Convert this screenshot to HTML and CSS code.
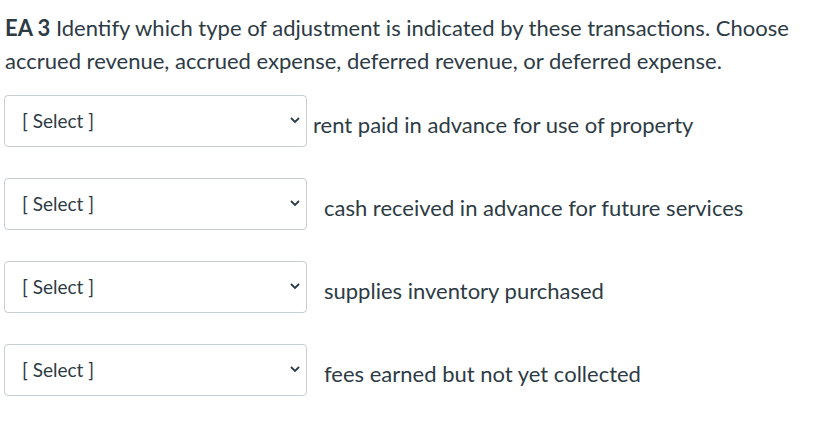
FILE: index.html
```html
<!DOCTYPE html>
<html>
<head>
<meta charset="utf-8">
<link rel="stylesheet" href="styles.css">
</head>
<body>
<div class="question">
  <p class="prompt"><strong>EA 3</strong> Identify which type of adjustment is indicated by these transactions. Choose accrued revenue, accrued expense, deferred revenue, or deferred expense.</p>
  <div class="rows">
    <div class="row">
      <div class="select"><span class="select-text">[ Select ]</span><svg class="chev" width="10" height="6" viewBox="0 0 10 6"><path d="M1 1 L5 5 L9 1" fill="none" stroke="#2d3b45" stroke-width="1.8"/></svg></div>
      <span class="label">rent paid in advance for use of property</span>
    </div>
    <div class="row">
      <div class="select"><span class="select-text">[ Select ]</span><svg class="chev" width="10" height="6" viewBox="0 0 10 6"><path d="M1 1 L5 5 L9 1" fill="none" stroke="#2d3b45" stroke-width="1.8"/></svg></div>
      <span class="label label-indent">cash received in advance for future services</span>
    </div>
    <div class="row">
      <div class="select"><span class="select-text">[ Select ]</span><svg class="chev" width="10" height="6" viewBox="0 0 10 6"><path d="M1 1 L5 5 L9 1" fill="none" stroke="#2d3b45" stroke-width="1.8"/></svg></div>
      <span class="label label-indent">supplies inventory purchased</span>
    </div>
    <div class="row">
      <div class="select"><span class="select-text">[ Select ]</span><svg class="chev" width="10" height="6" viewBox="0 0 10 6"><path d="M1 1 L5 5 L9 1" fill="none" stroke="#2d3b45" stroke-width="1.8"/></svg></div>
      <span class="label label-indent">fees earned but not yet collected</span>
    </div>
  </div>
</div>
</body>
</html>
```
FILE: styles.css
```css
html, body {
  margin: 0;
  padding: 0;
  background: #ffffff;
}
body {
  font-family: Lato, "Liberation Sans", sans-serif;
  color: #2d3b45;
}
.question {
  padding: 11px 4px 0 4px;
}
.prompt {
  margin: 0 0 18px 1px;
  font-size: 22px;
  line-height: 33px;
}
.prompt strong {
  font-weight: 700;
}
.rows {
  display: flex;
  flex-direction: column;
  gap: 31px;
}
.row {
  display: flex;
  align-items: flex-start;
}
.select {
  box-sizing: border-box;
  width: 303px;
  height: 52px;
  border: 1px solid #c7cdd1;
  border-radius: 4px;
  display: flex;
  align-items: center;
  justify-content: space-between;
  padding: 0 6px 0 17px;
  flex-shrink: 0;
}
.select-text {
  font-size: 19px;
  line-height: 23px;
  margin-top: -2px;
}
.chev {
  display: block;
  margin-top: -2px;
}
.label {
  font-size: 22px;
  line-height: 26px;
  margin-left: 6px;
  margin-top: 17px;
}
.label-indent {
  margin-left: 17px;
}
```
